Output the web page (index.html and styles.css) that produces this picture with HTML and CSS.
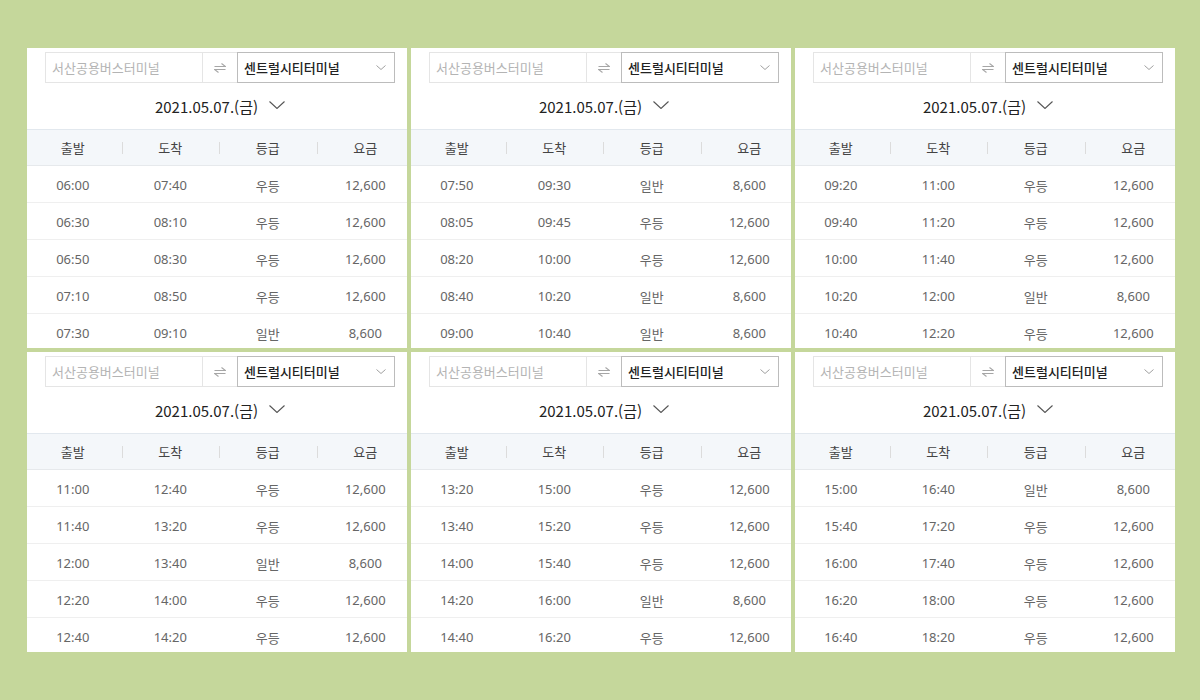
FILE: index.html
```html
<!DOCTYPE html>
<html lang="ko">
<head>
<meta charset="utf-8">
<title>시간표</title>
<link rel="stylesheet" href="styles.css">
</head>
<body>
<svg width="0" height="0" class="defs">
  <defs>
    <symbol id="swap" viewBox="0 0 12 10"><path d="M0.5 3.5H11.5L7.5 0.5M11.5 6.5H0.5L4.5 9.5" fill="none" stroke="currentColor" stroke-width="1.1"/></symbol>
    <symbol id="chev-s" viewBox="0 0 10 5"><path d="M0.5 0.5L5 4.5L9.5 0.5" fill="none" stroke="currentColor" stroke-width="1"/></symbol>
    <symbol id="chev-d" viewBox="0 0 16 8"><path d="M0.5 0.5L8 7.5L15.5 0.5" fill="none" stroke="currentColor" stroke-width="1.1"/></symbol>
  </defs>
</svg>
<div class="board">

<section class="panel"><div class="inner">
  <div class="search"><div class="from">서산공용버스터미널</div><div class="swap"><svg class="swap-ic"><use href="#swap"/></svg></div><div class="to"><span>센트럴시티터미널</span><svg class="chev-s"><use href="#chev-s"/></svg></div></div>
  <div class="date"><span>2021.05.07.(금)</span><svg class="chev-d"><use href="#chev-d"/></svg></div>
  <div class="thead"><div class="th">출발</div><div class="th">도착</div><div class="th">등급</div><div class="th">요금</div></div>
  <div class="row"><span>06:00</span><span>07:40</span><span>우등</span><span>12,600</span></div>
  <div class="row"><span>06:30</span><span>08:10</span><span>우등</span><span>12,600</span></div>
  <div class="row"><span>06:50</span><span>08:30</span><span>우등</span><span>12,600</span></div>
  <div class="row"><span>07:10</span><span>08:50</span><span>우등</span><span>12,600</span></div>
  <div class="row"><span>07:30</span><span>09:10</span><span>일반</span><span>8,600</span></div>
</div></section>

<section class="panel"><div class="inner">
  <div class="search"><div class="from">서산공용버스터미널</div><div class="swap"><svg class="swap-ic"><use href="#swap"/></svg></div><div class="to"><span>센트럴시티터미널</span><svg class="chev-s"><use href="#chev-s"/></svg></div></div>
  <div class="date"><span>2021.05.07.(금)</span><svg class="chev-d"><use href="#chev-d"/></svg></div>
  <div class="thead"><div class="th">출발</div><div class="th">도착</div><div class="th">등급</div><div class="th">요금</div></div>
  <div class="row"><span>07:50</span><span>09:30</span><span>일반</span><span>8,600</span></div>
  <div class="row"><span>08:05</span><span>09:45</span><span>우등</span><span>12,600</span></div>
  <div class="row"><span>08:20</span><span>10:00</span><span>우등</span><span>12,600</span></div>
  <div class="row"><span>08:40</span><span>10:20</span><span>일반</span><span>8,600</span></div>
  <div class="row"><span>09:00</span><span>10:40</span><span>일반</span><span>8,600</span></div>
</div></section>

<section class="panel"><div class="inner">
  <div class="search"><div class="from">서산공용버스터미널</div><div class="swap"><svg class="swap-ic"><use href="#swap"/></svg></div><div class="to"><span>센트럴시티터미널</span><svg class="chev-s"><use href="#chev-s"/></svg></div></div>
  <div class="date"><span>2021.05.07.(금)</span><svg class="chev-d"><use href="#chev-d"/></svg></div>
  <div class="thead"><div class="th">출발</div><div class="th">도착</div><div class="th">등급</div><div class="th">요금</div></div>
  <div class="row"><span>09:20</span><span>11:00</span><span>우등</span><span>12,600</span></div>
  <div class="row"><span>09:40</span><span>11:20</span><span>우등</span><span>12,600</span></div>
  <div class="row"><span>10:00</span><span>11:40</span><span>우등</span><span>12,600</span></div>
  <div class="row"><span>10:20</span><span>12:00</span><span>일반</span><span>8,600</span></div>
  <div class="row"><span>10:40</span><span>12:20</span><span>우등</span><span>12,600</span></div>
</div></section>

<section class="panel"><div class="inner">
  <div class="search"><div class="from">서산공용버스터미널</div><div class="swap"><svg class="swap-ic"><use href="#swap"/></svg></div><div class="to"><span>센트럴시티터미널</span><svg class="chev-s"><use href="#chev-s"/></svg></div></div>
  <div class="date"><span>2021.05.07.(금)</span><svg class="chev-d"><use href="#chev-d"/></svg></div>
  <div class="thead"><div class="th">출발</div><div class="th">도착</div><div class="th">등급</div><div class="th">요금</div></div>
  <div class="row"><span>11:00</span><span>12:40</span><span>우등</span><span>12,600</span></div>
  <div class="row"><span>11:40</span><span>13:20</span><span>우등</span><span>12,600</span></div>
  <div class="row"><span>12:00</span><span>13:40</span><span>일반</span><span>8,600</span></div>
  <div class="row"><span>12:20</span><span>14:00</span><span>우등</span><span>12,600</span></div>
  <div class="row"><span>12:40</span><span>14:20</span><span>우등</span><span>12,600</span></div>
</div></section>

<section class="panel"><div class="inner">
  <div class="search"><div class="from">서산공용버스터미널</div><div class="swap"><svg class="swap-ic"><use href="#swap"/></svg></div><div class="to"><span>센트럴시티터미널</span><svg class="chev-s"><use href="#chev-s"/></svg></div></div>
  <div class="date"><span>2021.05.07.(금)</span><svg class="chev-d"><use href="#chev-d"/></svg></div>
  <div class="thead"><div class="th">출발</div><div class="th">도착</div><div class="th">등급</div><div class="th">요금</div></div>
  <div class="row"><span>13:20</span><span>15:00</span><span>우등</span><span>12,600</span></div>
  <div class="row"><span>13:40</span><span>15:20</span><span>우등</span><span>12,600</span></div>
  <div class="row"><span>14:00</span><span>15:40</span><span>우등</span><span>12,600</span></div>
  <div class="row"><span>14:20</span><span>16:00</span><span>일반</span><span>8,600</span></div>
  <div class="row"><span>14:40</span><span>16:20</span><span>우등</span><span>12,600</span></div>
</div></section>

<section class="panel"><div class="inner">
  <div class="search"><div class="from">서산공용버스터미널</div><div class="swap"><svg class="swap-ic"><use href="#swap"/></svg></div><div class="to"><span>센트럴시티터미널</span><svg class="chev-s"><use href="#chev-s"/></svg></div></div>
  <div class="date"><span>2021.05.07.(금)</span><svg class="chev-d"><use href="#chev-d"/></svg></div>
  <div class="thead"><div class="th">출발</div><div class="th">도착</div><div class="th">등급</div><div class="th">요금</div></div>
  <div class="row"><span>15:00</span><span>16:40</span><span>일반</span><span>8,600</span></div>
  <div class="row"><span>15:40</span><span>17:20</span><span>우등</span><span>12,600</span></div>
  <div class="row"><span>16:00</span><span>17:40</span><span>우등</span><span>12,600</span></div>
  <div class="row"><span>16:20</span><span>18:00</span><span>우등</span><span>12,600</span></div>
  <div class="row"><span>16:40</span><span>18:20</span><span>우등</span><span>12,600</span></div>
</div></section>

</div>
</body>
</html>
```

FILE: styles.css
```css
html, body {
  margin: 0;
  padding: 0;
}
body {
  background: #c5d79b;
  font-family: "Noto Sans CJK KR", "Noto Sans", sans-serif;
  width: 1200px;
  height: 700px;
  overflow: hidden;
}
.defs {
  position: absolute;
  width: 0;
  height: 0;
}
.board {
  display: grid;
  grid-template-columns: repeat(3, 380px);
  grid-auto-rows: 300px;
  gap: 4px;
  padding: 48px 0 0 27px;
}
.panel {
  background: #fff;
  overflow: hidden;
}
.inner {
  width: 390px;
  margin-left: -3px;
}
.search {
  display: flex;
  width: 350px;
  height: 31px;
  margin: 4px 0 0 21px;
  font-size: 13px;
  line-height: 1;
}
.from {
  box-sizing: border-box;
  width: 158px;
  border: 1px solid #e5e5e5;
  color: #b4b4b4;
  display: flex;
  align-items: center;
  padding-left: 6px;
}
.swap {
  box-sizing: border-box;
  width: 34px;
  border-top: 1px solid #e5e5e5;
  border-bottom: 1px solid #e5e5e5;
  display: flex;
  align-items: center;
  justify-content: center;
  color: #a6a6a6;
}
.swap-ic {
  width: 12px;
  height: 10px;
}
.to {
  box-sizing: border-box;
  width: 158px;
  border: 1px solid #bcbcbc;
  display: flex;
  align-items: center;
  justify-content: space-between;
  padding: 0 8px 0 6px;
  color: #222;
  font-weight: 500;
}
.chev-s {
  width: 10px;
  height: 5px;
  color: #a0a0a0;
}
.date {
  height: 46px;
  display: flex;
  align-items: center;
  justify-content: center;
  gap: 11px;
  font-size: 15px;
  color: #222;
  padding-left: 2px;
}
.chev-d {
  width: 16px;
  height: 8px;
  color: #555;
  margin-top: -2px;
}
.thead {
  box-sizing: border-box;
  height: 37px;
  display: grid;
  grid-template-columns: repeat(4, 1fr);
  align-items: center;
  background: #f4f7fa;
  border-top: 1px solid #e2e8ee;
  border-bottom: 1px solid #e6e9ec;
  font-size: 13px;
  color: #444;
}
.th {
  text-align: center;
  position: relative;
}
.th + .th::before {
  content: "";
  position: absolute;
  left: 0;
  top: 50%;
  margin-top: -6px;
  height: 12px;
  width: 1px;
  background: #dcdcdc;
}
.row {
  box-sizing: border-box;
  height: 37px;
  padding-top: 2px;
  display: grid;
  grid-template-columns: repeat(4, 1fr);
  align-items: center;
  border-bottom: 1px solid #efefef;
  font-family: "Noto Sans", "Noto Sans CJK KR", sans-serif;
  font-size: 13px;
  color: #666;
}
.row span {
  text-align: center;
}
```
